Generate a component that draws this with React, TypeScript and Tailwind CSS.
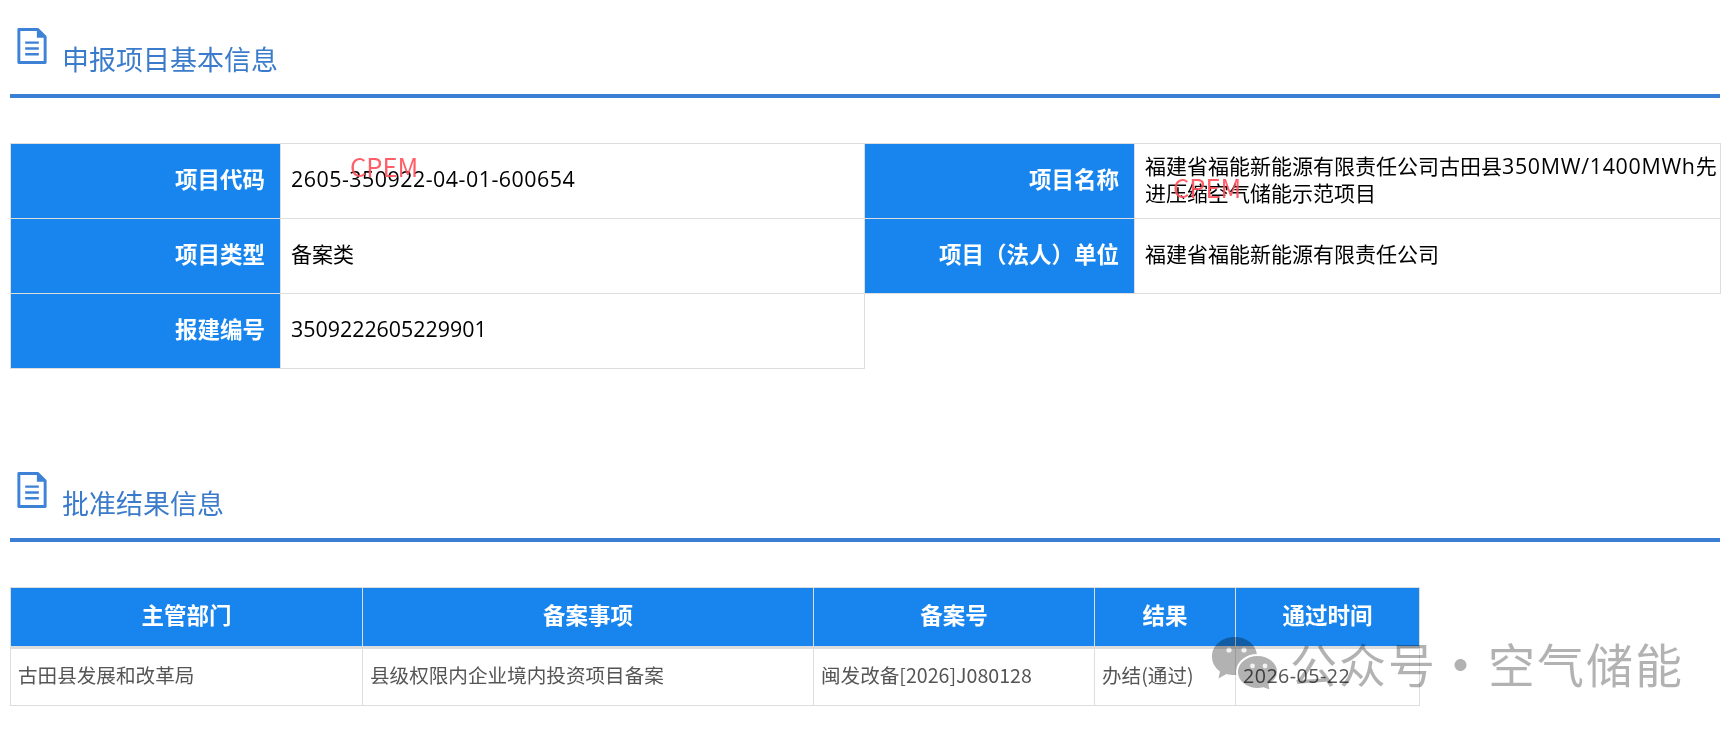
const LABEL = "border border-[#ddd] bg-[#1785ed] pb-[4px] pr-[15px] text-right text-[22.5px] font-bold text-white";
const VALUE = "border border-[#ddd] pl-[10px] pr-[2px] pb-[5px] text-[21px] leading-[27px] text-black";
const NUM = "font-['Open_Sans'] text-[21.4px]";
const HEAD = "border border-[#ddd] bg-[#1785ed] pb-[4px] text-center text-[22.5px] font-bold text-white";
const CELL = "border border-[#ddd] px-[7px] pb-[4px] text-[19.6px] text-[#555]";
const MARK = "absolute text-[25.5px] leading-none text-[#ff4d57]/90";

function DocIcon() {
  return (
    <svg width="30" height="36" viewBox="0 0 30 37" className="shrink-0">
      <path d="M1.5 1.5H21L28.5 9V35.5H1.5Z" fill="none" stroke="#3d82d6" strokeWidth="3" strokeLinejoin="round" />
      <path d="M20 1.5V10H28.5Z" fill="#3d82d6" />
      <path d="M8 15H22M8 21H22M8 27H22" stroke="#3d82d6" strokeWidth="2.5" />
    </svg>
  );
}

function SectionTitle({ title }: { title: string }) {
  return (
    <div className="h-[70px] border-b-4 border-[#3b7fd4]">
      <div className="flex pl-[7px]">
        <DocIcon />
        <h2 className="ml-[15px] mt-[11px] text-[27px] leading-[40px] font-normal text-[#3a7bcb]">{title}</h2>
      </div>
    </div>
  );
}

function Watermark() {
  return (
    <div className="absolute left-[1212px] top-[637px] flex h-[54px] items-center whitespace-nowrap text-[47px] leading-none text-black/30">
      <svg width="66" height="54" viewBox="0 0 66 54" className="shrink-0 mix-blend-multiply">
        <path d="M22.500 0C10 0 0 8.500 0 19.500c0 6 3 11.500 8 15l-1.500 7 8-4.500c2.500.7 5 1 8 1 12.500 0 22.500-8.500 22.500-19S35 0 22.500 0Z" fill="#b2b2b2" />
        <circle cx="17" cy="13" r="2.600" fill="#f2f2f2" />
        <circle cx="32" cy="13" r="2.600" fill="#f2f2f2" />
        <path d="M45.500 18C34 18 25 25.500 25 35s9 17 20.500 17c2 0 4-.2 6-.8l7 2.800-1-6.500C62 44.500 66 40 66 35c0-9.500-9-17-20.500-17Z" fill="#b2b2b2" stroke="#fff" strokeWidth="2" />
        <circle cx="40.500" cy="29" r="2.400" fill="#f2f2f2" />
        <circle cx="53" cy="29" r="2.400" fill="#f2f2f2" />
      </svg>
      <span className="ml-[12px] pb-[4px] tracking-[2px]">公众号</span>
      <span className="mr-[30px] w-[21px] pb-[4px] text-center font-bold">·</span>
      <span className="pb-[4px] tracking-[2px]">空气储能</span>
    </div>
  );
}

export default function App() {
  return (
    <div className="relative h-[733px] overflow-hidden bg-white pl-[10px] pt-[28px] font-['Noto_Sans_CJK_SC','Liberation_Sans',sans-serif]">
      <div className="w-[1710px]">
        <SectionTitle title="申报项目基本信息" />
        <div className="relative mt-[45px]">
          <table className="w-[1710px] table-fixed border-collapse">
            <colgroup>
              <col className="w-[270px]" />
              <col className="w-[584px]" />
              <col className="w-[270px]" />
              <col className="w-[586px]" />
            </colgroup>
            <tbody>
              <tr className="h-[75px]">
                <td className={LABEL}>项目代码</td>
                <td className={VALUE}>
                  <span className={`${NUM} tracking-[0.5px]`}>2605-350922-04-01-600654</span>
                </td>
                <td className={LABEL}>项目名称</td>
                <td className={VALUE}>
                  福建省福能新能源有限责任公司古田县<span className={`${NUM} tracking-[0.7px]`}>350MW/1400MWh</span>先进压缩空气储能示范项目
                </td>
              </tr>
              <tr className="h-[75px]">
                <td className={LABEL}>项目类型</td>
                <td className={VALUE}>备案类</td>
                <td className={LABEL}>项目（法人）单位</td>
                <td className={VALUE}>福建省福能新能源有限责任公司</td>
              </tr>
              <tr className="h-[75px]">
                <td className={LABEL}>报建编号</td>
                <td className={VALUE}>
                  <span className={NUM}>3509222605229901</span>
                </td>
              </tr>
            </tbody>
          </table>
          <span className={`${MARK} left-[340px] top-[10px]`}>CPEM</span>
          <span className={`${MARK} left-[1163px] top-[31px]`}>CPEM</span>
        </div>

        <div className="mt-[103px]">
          <SectionTitle title="批准结果信息" />
        </div>
        <table className="mt-[45px] w-[1409px] table-fixed border-collapse">
          <colgroup>
            <col className="w-[352px]" />
            <col className="w-[451px]" />
            <col className="w-[281px]" />
            <col className="w-[141px]" />
            <col className="w-[184px]" />
          </colgroup>
          <thead>
            <tr className="h-[60px] border-b-[3px] border-[#ddd]">
              <th className={HEAD}>主管部门</th>
              <th className={HEAD}>备案事项</th>
              <th className={HEAD}>备案号</th>
              <th className={HEAD}>结果</th>
              <th className={HEAD}>通过时间</th>
            </tr>
          </thead>
          <tbody>
            <tr className="h-[58px]">
              <td className={CELL}>古田县发展和改革局</td>
              <td className={CELL}>县级权限内企业境内投资项目备案</td>
              <td className={CELL}>闽发改备[2026]J080128</td>
              <td className={CELL}>办结(通过)</td>
              <td className={CELL}>
                <span className="font-['Open_Sans'] tracking-[0.5px]">2026-05-22</span>
              </td>
            </tr>
          </tbody>
        </table>
      </div>
      <Watermark />
    </div>
  );
}
